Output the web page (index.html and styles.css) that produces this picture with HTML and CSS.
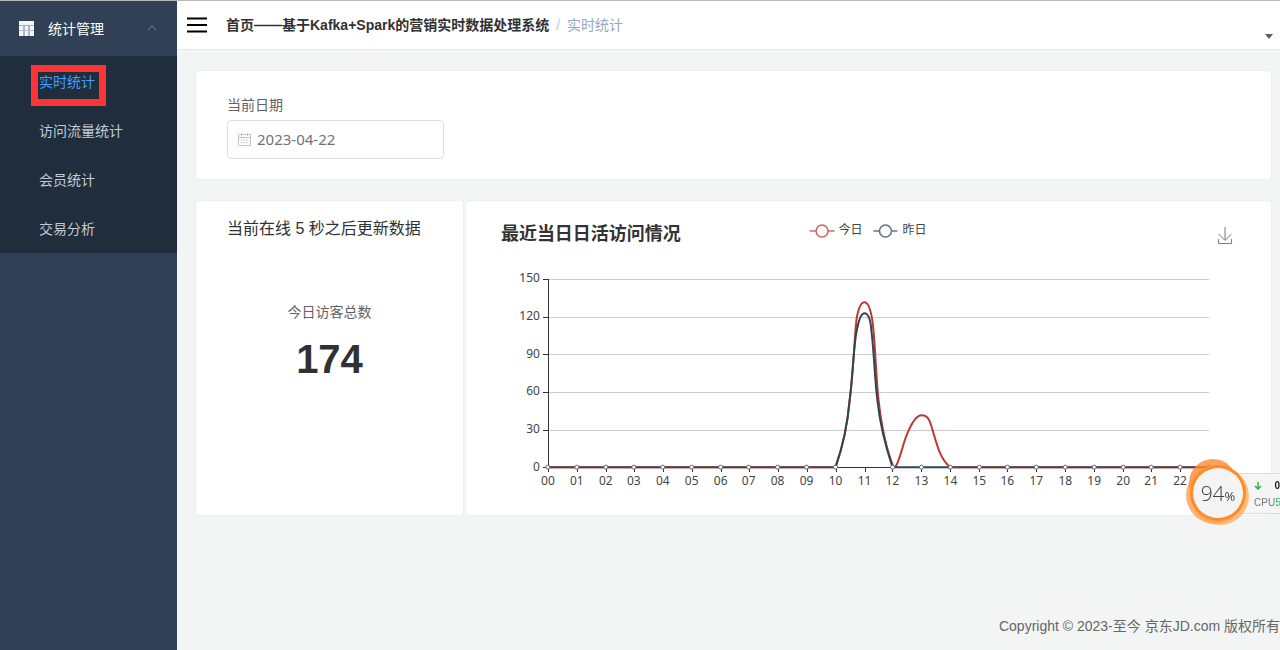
FILE: index.html
```html
<!DOCTYPE html>
<html lang="zh-CN">
<head>
<meta charset="utf-8">
<title>实时统计</title>
<link rel="stylesheet" href="styles.css">
</head>
<body>
<div class="layout">
  <nav class="sidebar">
    <button class="menu-title" type="button" aria-expanded="true">
      <svg class="menu-icon" width="15" height="15" viewBox="0 0 15 15"><path d="M0 0h15v15H0z" fill="#f4f5f7"/><path d="M0 4.5h15" stroke="#aab1ba"/><path d="M5 5v10M10 5v10" stroke="#6c7887"/><path d="M0 9.500h15" stroke="#b9bfc7"/></svg>
      <span>统计管理</span>
      <svg class="menu-arrow" width="10" height="6" viewBox="0 0 10 6"><path d="M1 5l4-4 4 4" stroke="#76818f" fill="none"/></svg>
    </button>
    <ul class="submenu">
      <li class="current"><a class="menu-link active" href="#realtime">实时统计</a></li>
      <li><a class="menu-link" href="#traffic">访问流量统计</a></li>
      <li><a class="menu-link" href="#members">会员统计</a></li>
      <li><a class="menu-link" href="#trade">交易分析</a></li>
    </ul>
  </nav>
  <div class="page">
    <header class="topbar">
      <button class="toggle" type="button" aria-label="折叠菜单">
        <svg width="20" height="16" viewBox="0 0 20 16"><path d="M0 1.5h20M0 8h20M0 14.5h20" stroke="#000" stroke-width="2"/></svg>
      </button>
      <div class="crumbs">
        <a class="crumb-home" href="#home">首页——基于Kafka+Spark的营销实时数据处理系统</a>
        <span class="crumb-sep">/</span>
        <span class="crumb-here">实时统计</span>
      </div>
      <button class="user-menu" type="button" aria-label="用户菜单"><svg width="8" height="5" viewBox="0 0 8 5"><path d="M0 0h8L4 5z" fill="#5a5e66"/></svg></button>
    </header>
    <main class="content">
      <section class="card filter">
        <label class="filter-label" for="day">当前日期</label>
        <div class="date-box">
          <svg width="13" height="13" viewBox="0 0 13 13" fill="none" stroke="#c0c4cc"><path d="M.5 1.5h12v11H.5zM.5 4.5h12M3.5 0v3M9.5 0v3"/><path d="M3 7h7M3 9.5h7" stroke-dasharray="1.6 1"/></svg>
          <input class="date-input" id="day" type="text" value="2023-04-22">
        </div>
      </section>
      <div class="panels">
        <section class="card online">
          <h2 class="online-title">当前在线 5 秒之后更新数据</h2>
          <p class="stat-label">今日访客总数</p>
          <p class="stat-value">174</p>
        </section>
        <section class="card chart-card">
          <svg class="chart" viewBox="0 0 806 314" role="img" aria-label="最近当日日活访问情况">
            <defs>
              <marker id="dot" markerUnits="userSpaceOnUse" markerWidth="6" markerHeight="6" refX="3" refY="3"><circle cx="3" cy="3" r="2" fill="#fff" stroke="#5b6770"/></marker>
            </defs>
            <text class="chart-title" x="35" y="39">最近当日日活访问情况</text>
            <g class="legend">
              <path d="M344 30h25" stroke="#c23531" stroke-opacity=".75" stroke-width="1.5"/><circle cx="356.500" cy="30" r="6" fill="#fff" stroke="#d4605d" stroke-width="1.5"/>
              <text x="373" y="33">今日</text>
              <path d="M408 30h24" stroke="#2f4554" stroke-opacity=".75" stroke-width="1.500"/><circle cx="420" cy="30" r="6" fill="#fff" stroke="#61717d" stroke-width="1.5"/>
              <text x="437" y="33">昨日</text>
            </g>
            <path class="save" d="M760 26v13M753.500 33l6.500 6.500 6.500-6.500M753.500 38v4.500h13V38"/>
            <g transform="translate(82 78)">
              <path class="grid" d="M0 .5h662M0 38.500h662M0 75.500h662M0 113.500h662M0 151.500h662"/>
              <path class="axis" d="M.5 0V188M-5 .5h5M-5 38.500h5M-5 75.500h5M-5 113.500h5M-5 151.500h5M-5 188.500h667M.5 188v5M29.500 188v5M58.500 188v5M86.500 188v5M115.500 188v5M144.500 188v5M173.500 188v5M201.500 188v5M230.500 188v5M259.500 188v5M288.500 188v5M317.500 188v5M345.500 188v5M374.500 188v5M403.500 188v5M432.500 188v5M460.500 188v5M489.500 188v5M518.500 188v5M547.500 188v5M576.500 188v5M604.500 188v5M633.500 188v5M662.500 188v5"/>
              <g transform="translate(0 .5)">
                <path class="line today" d="M0 188H288C295 168 300 145 302 122C306 90 307 57 309 40C311 28 314 23 317 23C320 23 323 29 325 42C328 65 328 92 331 120C334 148 339 170 346 188Q347 189 349 186C353 178 356 163 360 154C365 142 369 136 374 136C380 136 382 140 384 147C389 163 392 180 403 188H662"/>
                <path class="line yesterday" d="M288 188C295 168 300 145 302 122C306 92 306 62 310 48C312 38 314 34 317 34C320 34 323 39 324 52C327 78 327 98 330 122C333 150 339 170 345 188H403"/>
                <path class="line yesterday flat" d="M0 188H288M403 188H662"/>
                <path class="dots" d="M0 188H29H58H86H115H144H173H201H230H259H288M345 188H374H403H432H460H489H518H547H576H604H633H662"/>
              </g>
              <g class="y-labels">
                <text x="-8" y="3">150</text><text x="-8" y="41">120</text><text x="-8" y="79">90</text><text x="-8" y="116">60</text><text x="-8" y="154">30</text><text x="-8" y="192">0</text>
              </g>
              <g class="x-labels">
                <text x="0" y="206">00</text><text x="29" y="206">01</text><text x="58" y="206">02</text><text x="86" y="206">03</text><text x="115" y="206">04</text><text x="144" y="206">05</text><text x="173" y="206">06</text><text x="201" y="206">07</text><text x="230" y="206">08</text><text x="259" y="206">09</text><text x="288" y="206">10</text><text x="317" y="206">11</text><text x="345" y="206">12</text><text x="374" y="206">13</text><text x="403" y="206">14</text><text x="432" y="206">15</text><text x="460" y="206">16</text><text x="489" y="206">17</text><text x="518" y="206">18</text><text x="547" y="206">19</text><text x="576" y="206">20</text><text x="604" y="206">21</text><text x="633" y="206">22</text>
              </g>
            </g>
          </svg>
        </section>
      </div>
    </main>
    <footer class="footer">Copyright © 2023-至今 京东JD.com 版权所有</footer>
  </div>
</div>
<aside class="monitor">
  <div class="monitor-info">
    <div class="net"><svg width="8" height="8" viewBox="0 0 8 8"><path d="M4 0v7M1 4l3 3 3-3" fill="none" stroke="#22b84c" stroke-width="1.500"/></svg><span>0</span></div>
    <div class="cpu">CPU <span class="cpu-value">5</span></div>
  </div>
  <div class="gauge">
    <svg class="gauge-ring" width="66" height="68" viewBox="0 0 66 68"><circle cx="28" cy="25" r="24" fill="#ff8a35" fill-opacity=".8"/><circle cx="30" cy="37" r="29" fill="#ff9a4a" fill-opacity=".75"/><circle cx="35" cy="38" r="29" fill="#ffa552" fill-opacity=".7"/><circle cx="33" cy="35" r="28" fill="#ff8c24"/><circle cx="33" cy="35" r="25" fill="#f4f4f4"/></svg>
    <span class="gauge-text">94<small class="percent">%</small></span>
  </div>
</aside>
</body>
</html>
```
FILE: styles.css
```css
*, *::after { box-sizing: border-box; }
body {
  margin: 0;
  font-family: "Liberation Sans", "Noto Sans CJK SC", sans-serif;
  font-size: 14px;
  color: #606266;
  background: #f4f4f4;
}
button { border: 0; padding: 0; background: none; font: inherit; color: inherit; }
a { text-decoration: none; color: inherit; }
h2, p, ul { margin: 0; padding: 0; font-weight: normal; }

.layout { display: flex; min-height: 100vh; border-top: 1px solid #b9b9b9; }
.sidebar { width: 177px; flex: none; background: #304156; }
.menu-title {
  display: flex;
  align-items: center;
  width: 100%;
  height: 55px;
  padding: 0 20px 1px 19px;
  color: #fff;
}
.menu-icon { margin-right: 14px; }
.menu-arrow { margin-left: auto; }
.submenu { list-style: none; background: #1f2d3d; padding-top: 1px; }
.current { position: relative; }
.current::after {
  content: "";
  position: absolute;
  left: 31px;
  top: 8px;
  width: 75px;
  height: 41px;
  border: 7px solid #fb3535;
  pointer-events: none;
}
.menu-link { display: block; padding: 2px 0 0 39px; line-height: 47px; color: #bfcbd9; }
.menu-link.active { color: #409eff; }

.page { flex: 1; min-width: 0; display: flex; flex-direction: column; background: #f3f5f5; }
.topbar {
  display: flex;
  align-items: center;
  height: 49px;
  padding: 0 7px 0 10px;
  background: #fff;
  border-bottom: 1px solid #e3e6e8;
}
.toggle svg { display: block; }
.crumbs { display: flex; gap: 7px; margin-left: 19px; flex: 1; white-space: nowrap; line-height: 20px; }
.crumb-home { font-weight: bold; color: #303133; }
.crumb-sep { color: #c0c4cc; }
.crumb-here { color: #97a8be; }
.user-menu { align-self: flex-end; padding-bottom: 10px; line-height: 5px; }

.content { padding: 20px 8px 0 18px; display: grid; gap: 20px; }
.card { background: #fff; border: 1px solid #ebeef5; border-radius: 4px; }
.filter { height: 110px; padding: 24px 31px; }
.filter-label { display: block; line-height: 20px; margin-bottom: 5px; }
.date-box {
  display: flex;
  align-items: center;
  gap: 6px;
  width: 217px;
  height: 39px;
  padding-left: 10px;
  border: 1px solid #dcdfe6;
  border-radius: 4px;
}
.date-input {
  width: 150px;
  padding: 0 0 1px;
  border: 0;
  outline: 0;
  font: 15px "Noto Sans", "Open Sans", sans-serif;
  color: #707276;
}
.panels { display: grid; grid-template-columns: 1fr 3fr; gap: 1px; }
.online { padding: 16px 31px; }
.online-title { font-size: 16px; line-height: 24px; color: #303133; white-space: nowrap; }
.stat-label { margin-top: 61px; text-align: center; line-height: 20px; }
.stat-value { margin-top: 13px; text-align: center; font-size: 40px; line-height: 48px; font-weight: bold; color: #303133; }
.chart { display: block; width: 100%; font-family: "Noto Sans", "Noto Sans CJK SC", sans-serif; font-size: 12px; fill: #444; }
.chart-title { font-size: 18px; font-weight: bold; fill: #333; }
.save { fill: none; stroke: #777; }
.grid { stroke: #ccc; fill: none; shape-rendering: crispEdges; }
.axis { stroke: #333; fill: none; shape-rendering: crispEdges; }
.line { fill: none; stroke-width: 2; }
.today { stroke: #c23531; }
.yesterday { stroke: #2f4554; }
.flat { stroke-opacity: 0.8; }
.dots { fill: none; marker: url(#dot); }
.y-labels { text-anchor: end; }
.x-labels { text-anchor: middle; }

.footer { margin-top: auto; padding-bottom: 14px; line-height: 20px; text-align: right; white-space: nowrap; color: #666; }

.monitor { position: fixed; right: 0; top: 458px; width: 95px; height: 68px; }
.monitor-info {
  position: absolute;
  left: 40px;
  right: 0;
  top: 15px;
  height: 41px;
  padding: 3px 0 0 28px;
  background: #f5f5f5;
  border: 1px solid #dcdcdc;
  border-right: 0;
  font-size: 10px;
  line-height: 18px;
  white-space: nowrap;
}
.net { display: flex; align-items: center; justify-content: space-between; height: 17px; font-weight: bold; color: #222; }
.cpu { display: flex; justify-content: space-between; color: #777; font-size: 10px; }
.cpu-value { color: #22c55e; }
.gauge { position: relative; width: 66px; height: 68px; }
.gauge-ring { display: block; }
.gauge-text {
  position: absolute;
  inset: 0;
  text-align: center;
  font: 300 21px/70px "Open Sans", "Noto Sans", sans-serif;
  color: #444;
}
.percent { font-size: 13px; font-weight: 400; }
```
